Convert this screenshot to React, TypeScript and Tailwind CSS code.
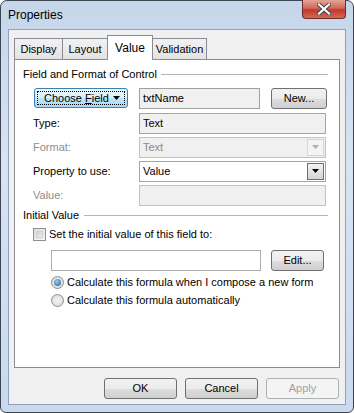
import React from "react";

const font = { fontFamily: '"Liberation Sans", Arial, sans-serif' };

function Btn({ label, className, disabled }: { label: React.ReactNode; className: string; disabled?: boolean }) {
  if (disabled) {
    return (
      <div className={`flex items-center justify-center rounded-[3px] border border-[#adb2b5] bg-[#f4f4f4] text-[#a0a0a0] ${className}`}>
        {label}
      </div>
    );
  }
  return (
    <div className={`flex items-center justify-center rounded-[3px] border border-[#707070] bg-[linear-gradient(#f2f2f2_0%,#ebebeb_50%,#dddddd_50%,#cfcfcf_100%)] text-black ${className}`}>
      {label}
    </div>
  );
}

function Box({ text, className }: { text?: string; className: string }) {
  return <div className={`flex items-center px-[3px] text-black ${className}`}>{text}</div>;
}

function Arrow({ color }: { color: string }) {
  return (
    <svg width="7" height="4" viewBox="0 0 7 4">
      <path d="M0 0h7L3.5 4z" fill={color} />
    </svg>
  );
}

const tab = "h-[21px] border border-b-0 border-[#898c95] bg-[linear-gradient(#f2f2f2,#e3e3e3)] flex items-center justify-center";

export default function App() {
  return (
    <div className="w-[354px] h-[413px] bg-white text-[11px] whitespace-nowrap" style={font}>
      <div className="relative w-[354px] h-[413px] rounded-t-[7px] rounded-b-[6px] border border-[#3d4550] bg-[linear-gradient(180deg,#c6d6ea_0%,#d6e4f3_40%,#c9daee_100%)] flex flex-col">
        {/* title bar */}
        <div className="h-[28px] flex items-start justify-between pl-[7px] pr-[7px]">
          <span className="mt-[5px] text-[12px] text-black">Properties</span>
          <div className="w-[44px] h-[19px] -mt-px rounded-b-[4px] border border-[#6e2b2b] border-t-0 bg-[linear-gradient(#e5a595_0%,#d1695a_45%,#c03a2c_55%,#d46a52_100%)] flex items-center justify-center">
            <svg width="14" height="12" viewBox="0 0 14 12">
              <path d="M2 1.5l10 9M12 1.5l-10 9" stroke="#3a3f4a" strokeWidth="4" strokeLinecap="square" />
              <path d="M2 1.5l10 9M12 1.5l-10 9" stroke="#ffffff" strokeWidth="2.2" strokeLinecap="square" />
            </svg>
          </div>
        </div>

        {/* client area */}
        <div className="mx-[7px] flex-1 mb-[7px] border border-[#8ea1b8] bg-[#f0f0f0] flex flex-col px-[5px] pt-[6px]">
          {/* tabs */}
          <div className="flex items-end h-[23px]">
            <div className={`${tab} w-[49px]`}>Display</div>
            <div className={`${tab} w-[45px] border-l-0`}>Layout</div>
            <div className="relative z-10 -ml-px -mb-px w-[46px] h-[25px] border border-b-0 border-[#898c95] bg-white flex justify-center items-start pt-[3px] text-[12px]">Value</div>
            <div className={`${tab} w-[54px] border-l-0`}>Validation</div>
          </div>

          {/* panel */}
          <div className="h-[309px] border border-[#898c95] bg-white flex flex-col pl-[8px] pr-[11px] pt-[6px]">
            <div className="flex items-center h-[16px]">
              <span>Field and Format of Control</span>
              <div className="flex-1 ml-[4px] h-px bg-[#b5b5b5]" />
            </div>

            <div className="flex items-center mt-[5px] h-[22px]">
              <div className="ml-[11px] w-[94px] h-[20px] rounded-[3px] border border-[#3c7fb1] bg-[linear-gradient(#eaf6fd_0%,#d9f0fc_50%,#bee6fd_50%,#a7d9f5_100%)] p-[2px]">
                <div className="h-full border border-dotted border-black flex items-center pl-[6px] pr-[4px] justify-between">
                  <span>Choose <span className="underline">F</span>ield</span>
                  <Arrow color="#000" />
                </div>
              </div>
              <Box text="txtName" className="ml-[11px] w-[121px] h-[21px] border border-[#a0a0a0] bg-[#f0f0f0]" />
              <Btn label="New..." className="ml-[11px] w-[56px] h-[21px]" />
            </div>

            <div className="flex items-center mt-[4px] h-[21px]">
              <span className="ml-[10px] w-[106px]">Type:</span>
              <Box text="Text" className="w-[187px] h-[21px] border border-[#a5a5a5] bg-[#f0f0f0]" />
            </div>

            <div className="flex items-center mt-[2px] h-[22px]">
              <span className="ml-[10px] w-[106px] text-[#8d8d8d]">Format:</span>
              <div className="w-[187px] h-[21px] border border-[#b1c5dc] bg-[#f0f0f0] flex items-center justify-between pl-[3px] pr-[1px]">
                <span className="text-[#8a8a8a]">Text</span>
                <div className="w-[17px] h-[17px] border border-[#d5d5d5] bg-[#f4f4f4] flex items-center justify-center">
                  <Arrow color="#b0b0b0" />
                </div>
              </div>
            </div>

            <div className="flex items-center mt-[2px] h-[22px]">
              <span className="ml-[10px] w-[106px]">Property to use:</span>
              <div className="w-[187px] h-[21px] border border-[#a5a5a5] bg-white flex items-center justify-between pl-[3px] pr-[1px]">
                <span>Value</span>
                <div className="w-[17px] h-[17px] border border-[#707070] bg-[linear-gradient(#f2f2f2,#d4d4d4)] flex items-center justify-center">
                  <Arrow color="#000" />
                </div>
              </div>
            </div>

            <div className="flex items-center mt-[2px] h-[22px]">
              <span className="ml-[10px] w-[106px] text-[#8d8d8d]">Value:</span>
              <Box className="w-[187px] h-[21px] border border-[#b1c5dc] bg-[#f0f0f0]" />
            </div>

            <div className="flex items-center mt-[1px] h-[16px]">
              <span>Initial Value</span>
              <div className="flex-1 ml-[5px] h-px bg-[#b5b5b5]" />
            </div>

            <div className="flex items-center mt-[3px] h-[16px] ml-[10px]">
              <div className="w-[13px] h-[13px] border border-[#8f8f8f] bg-[linear-gradient(135deg,#dcdcdc,#f6f6f6)] p-[2px]">
                <div className="w-full h-full border border-[#d0d0d0] bg-[linear-gradient(135deg,#cfcfcf,#f0f0f0)]" />
              </div>
              <span className="ml-[3px]">Set the initial value of this field to:</span>
            </div>

            <div className="flex items-center mt-[7px] h-[22px] ml-[28px]">
              <Box className="w-[210px] h-[21px] border border-[#abadb3] bg-white" />
              <Btn label="Edit..." className="ml-[10px] w-[53px] h-[21px]" />
            </div>

            <div className="flex items-center mt-[3px] h-[16px] ml-[28px]">
              <div className="w-[13px] h-[13px] rounded-full border border-[#8f8f8f] bg-[radial-gradient(circle,#f4f4f4,#d6d6d6)] flex items-center justify-center">
                <div className="w-[7px] h-[7px] rounded-full bg-[radial-gradient(circle_at_40%_35%,#8fd0f7,#1c5b9b)]" />
              </div>
              <span className="ml-[3px]">Calculate this formula when I compose a new form</span>
            </div>

            <div className="flex items-center mt-[2px] h-[16px] ml-[28px]">
              <div className="w-[13px] h-[13px] rounded-full border border-[#8f8f8f] bg-[radial-gradient(circle,#f4f4f4,#d6d6d6)]" />
              <span className="ml-[3px]">Calculate this formula automatically</span>
            </div>
          </div>

          {/* buttons */}
          <div className="flex justify-end gap-[8px] mt-[10px] pr-[1px]">
            <Btn label="OK" className="w-[73px] h-[21px]" />
            <Btn label="Cancel" className="w-[73px] h-[21px]" />
            <Btn label="Apply" disabled className="w-[73px] h-[21px]" />
          </div>
        </div>
      </div>
    </div>
  );
}
